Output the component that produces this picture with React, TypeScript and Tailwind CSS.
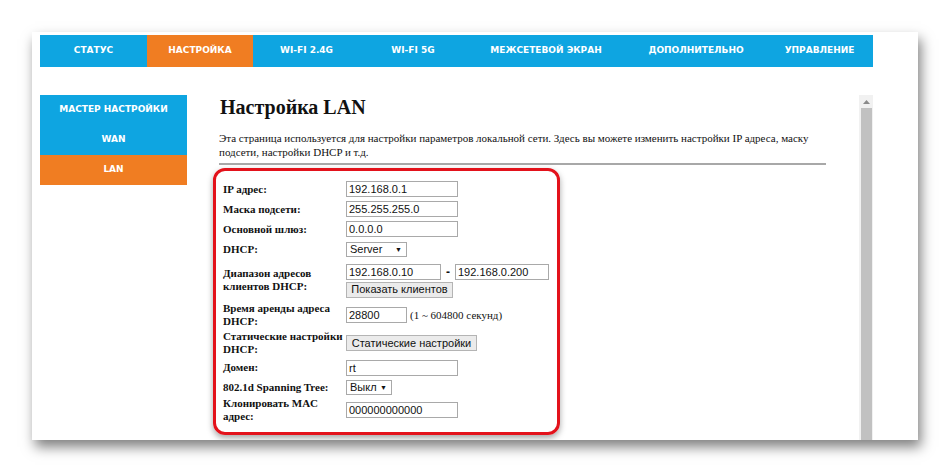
import React from "react";

const TABS = [
  { label: "СТАТУС", w: "w-[107px]" },
  { label: "НАСТРОЙКА", w: "w-[106px]", active: true },
  { label: "WI-FI 2.4G", w: "w-[107px]" },
  { label: "WI-FI 5G", w: "w-[106px]" },
  { label: "МЕЖСЕТЕВОЙ ЭКРАН", w: "w-[160px]" },
  { label: "ДОПОЛНИТЕЛЬНО", w: "w-[140px]" },
  { label: "УПРАВЛЕНИЕ", w: "w-[107px]" },
];

const SIDE = [
  { label: "МАСТЕР НАСТРОЙКИ" },
  { label: "WAN" },
  { label: "LAN", active: true },
];

function TextBox({ value, w }: { value: string; w: string }) {
  return (
    <div
      className={`${w} h-[16px] border border-[#a9a9a9] bg-white px-[2px] text-[11px] leading-[14px] text-[#111] font-['Liberation_Sans',Arial,sans-serif]`}
    >
      {value}
    </div>
  );
}

function SelectBox({ value, w }: { value: string; w: string }) {
  return (
    <div
      className={`${w} h-[15px] border border-[#a9a9a9] bg-white pl-[3px] pr-[4px] flex items-center justify-between text-[11px] leading-[13px] text-[#111] font-['Liberation_Sans',Arial,sans-serif]`}
    >
      <span>{value}</span>
      <span className="text-[7px]">▼</span>
    </div>
  );
}

function Btn({ label, w }: { label: string; w: string }) {
  return (
    <div
      className={`${w} h-[16px] border border-[#b4b4b4] bg-[#ebebeb] flex items-center justify-center text-[11px] text-[#111] font-['Liberation_Sans',Arial,sans-serif]`}
    >
      {label}
    </div>
  );
}

function Row({ h, label, children }: { h: string; label: React.ReactNode; children: React.ReactNode }) {
  return (
    <div className={`flex items-center ${h}`}>
      <div className="w-[123px] shrink-0 whitespace-nowrap text-[11px] leading-[13px] font-bold text-[#111]">{label}</div>
      <div>{children}</div>
    </div>
  );
}

export default function App() {
  return (
    <div className="w-[950px] h-[472px] bg-white pt-[32px] pl-[32px] font-['Liberation_Serif','Times_New_Roman',serif]">
      <div className="w-[886px] h-[408px] bg-white pt-[3px] pl-[8px] flex flex-col shadow-[3px_7px_12px_rgba(0,0,0,0.5)]">
        {/* top menu */}
        <div className="flex w-[833px] h-[32px] bg-[#0ea5e1]">
          {TABS.map((t) => (
            <div
              key={t.label}
              className={`${t.w} h-full flex items-center justify-center text-white text-[9px] font-bold font-['DejaVu_Sans',Verdana,sans-serif] ${t.active ? "bg-[#f07d22]" : ""}`}
            >
              {t.label}
            </div>
          ))}
        </div>

        <div className="flex w-[833px] mt-[28px] h-[345px]">
          {/* side menu */}
          <div className="w-[147px] shrink-0 self-start">
            {SIDE.map((s) => (
              <div
                key={s.label}
                className={`h-[30px] flex items-center justify-center text-white text-[9px] font-bold font-['DejaVu_Sans',Verdana,sans-serif] ${s.active ? "bg-[#f07d22] h-[29px]" : "bg-[#0ea5e1]"}`}
              >
                {s.label}
              </div>
            ))}
          </div>

          {/* content frame */}
          <div className="flex-1 flex overflow-hidden">
            <div className="flex-1 pl-[32px] pr-[33px] text-[#111]">
              <h1 className="text-[20px] leading-[22px] font-bold mt-[1px] ml-[1px]">Настройка LAN</h1>
              <p className="mt-[14px] text-[11px] leading-[13.5px]">
                Эта страница используется для настройки параметров локальной сети. Здесь вы можете изменить настройки IP адреса, маску
                подсети, настройки DHCP и т.д.
              </p>
              <div className="mt-[4px] h-[2px] bg-[#a8a8a8]" />

              <div className="mt-[3px] -ml-[6px] w-[347px] border-[3px] border-[#e3121b] rounded-[12px] pl-[7px] pt-[8px] pb-[9px] shadow-[0_3px_6px_rgba(0,0,0,0.35)]">
                <Row h="h-[20px]" label="IP адрес:">
                  <TextBox value="192.168.0.1" w="w-[112px]" />
                </Row>
                <Row h="h-[20px]" label="Маска подсети:">
                  <TextBox value="255.255.255.0" w="w-[112px]" />
                </Row>
                <Row h="h-[20px]" label="Основной шлюз:">
                  <TextBox value="0.0.0.0" w="w-[112px]" />
                </Row>
                <Row h="h-[20px]" label="DHCP:">
                  <SelectBox value="Server" w="w-[61px]" />
                </Row>
                <Row h="h-[42px]" label={<>Диапазон адресов<br />клиентов DHCP:</>}>
                  <div className="flex items-center">
                    <TextBox value="192.168.0.10" w="w-[95px]" />
                    <span className="w-[14px] text-center text-[12px] font-bold font-['Liberation_Sans',Arial,sans-serif]">-</span>
                    <TextBox value="192.168.0.200" w="w-[94px]" />
                  </div>
                  <div className="mt-[1px]">
                    <Btn label="Показать клиентов" w="w-[107px]" />
                  </div>
                </Row>
                <Row h="h-[28px]" label={<>Время аренды адреса<br />DHCP:</>}>
                  <div className="flex items-center">
                    <TextBox value="28800" w="w-[61px]" />
                    <span className="ml-[3px] text-[11px]">(1 ~ 604800 секунд)</span>
                  </div>
                </Row>
                <Row h="h-[28px]" label={<>Статические настройки<br />DHCP:</>}>
                  <Btn label="Статические настройки" w="w-[131px]" />
                </Row>
                <Row h="h-[21px]" label="Домен:">
                  <TextBox value="rt" w="w-[112px]" />
                </Row>
                <Row h="h-[18px]" label="802.1d Spanning Tree:">
                  <SelectBox value="Выкл" w="w-[46px]" />
                </Row>
                <Row h="h-[27px]" label={<>Клонировать MAC<br />адрес:</>}>
                  <TextBox value="000000000000" w="w-[112px]" />
                </Row>
              </div>
            </div>

            {/* scrollbar */}
            <div className="w-[14px] shrink-0 bg-[#f1f1f1] flex flex-col items-center">
              <div className="h-[13px] w-full flex items-center justify-center">
                <svg width="7" height="4" viewBox="0 0 7 4">
                  <polygon points="3.5,0 7,4 0,4" fill="#8a8a8a" />
                </svg>
              </div>
              <div className="flex-1 w-[11px] bg-[#c1c1c1]" />
            </div>
          </div>
        </div>
      </div>
    </div>
  );
}
